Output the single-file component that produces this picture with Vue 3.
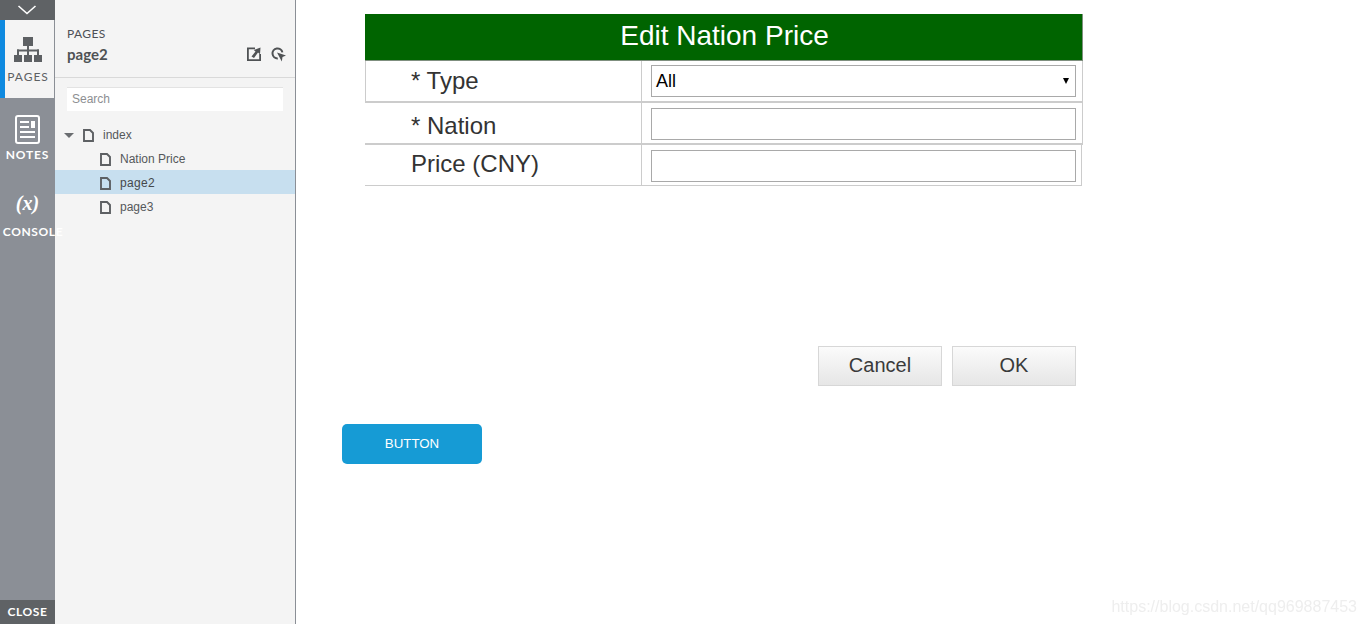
<script setup>
const tabs = [
  { id: 'pages', label: 'PAGES' },
  { id: 'notes', label: 'NOTES' },
  { id: 'console', label: 'CONSOLE' }
]
const children = [
  { name: 'Nation Price', selected: false },
  { name: 'page2', selected: true },
  { name: 'page3', selected: false }
]
</script>

<template>
  <div class="app">
    <nav class="rail">
      <div class="collapse">
        <svg width="20" height="10" viewBox="0 0 20 10"><path d="M1.5 1 L10 8.5 L18.5 1" fill="none" stroke="#fff" stroke-width="1.6" /></svg>
      </div>
      <div class="tab active">
        <svg width="28" height="25" viewBox="0 0 28 25" fill="#5d6063">
          <rect x="9" y="0" width="10" height="9" />
          <rect x="13" y="9" width="2" height="4" />
          <rect x="3" y="12.5" width="22" height="2" />
          <rect x="3" y="12.5" width="2" height="6" />
          <rect x="13" y="12.5" width="2" height="6" />
          <rect x="23" y="12.5" width="2" height="6" />
          <rect x="0" y="18" width="8" height="7" />
          <rect x="10" y="18" width="8" height="7" />
          <rect x="20" y="18" width="8" height="7" />
        </svg>
        <span class="tab-label">{{ tabs[0].label }}</span>
      </div>
      <div class="tab notes">
        <svg width="25" height="29" viewBox="0 0 25 29">
          <rect x="1" y="1" width="23" height="27" rx="2" fill="none" stroke="#fff" stroke-width="2" />
          <path d="M5 7h9M5 12h9M5 17h15M5 22h15" stroke="#fff" stroke-width="2" fill="none" />
          <rect x="16" y="6" width="4" height="7" fill="#fff" />
        </svg>
        <span class="tab-label">{{ tabs[1].label }}</span>
      </div>
      <div class="tab console">
        <span class="var">(x)</span>
        <span class="tab-label">{{ tabs[2].label }}</span>
      </div>
      <div class="close">CLOSE</div>
    </nav>

    <aside class="panel">
      <header class="panel-head">
        <div class="head-text">
          <div class="caption">PAGES</div>
          <div class="current">page2</div>
        </div>
        <div class="head-icons">
          <svg width="14" height="14" viewBox="0 0 14 14" fill="#4f5254">
            <path d="M0 0.5 H8 V2.2 H1.8 V12.2 H12.2 V7 H14 V14 H0 Z" />
            <path d="M4.5 9.5 L8.5 4.6 L6.8 3 L13.5 0.5 L13 7.2 L11 5.6 L7 11 Z" />
          </svg>
          <svg width="15" height="15" viewBox="0 0 15 15" fill="none">
            <path d="M6.8 11.4 A5 5 0 1 1 11.4 5.4" stroke="#4f5254" stroke-width="2" />
            <path d="M6 5.5 L15 8.4 L11.5 10 L10.8 14.5 Z" fill="#4f5254" />
          </svg>
        </div>
      </header>
      <div class="search">Search</div>
      <ul class="tree">
        <li class="node root">
          <span class="caret"></span>
          <svg class="file" width="11" height="13" viewBox="0 0 11 13"><path d="M1 1 H7 L10 4 V12 H1 Z" fill="none" stroke="#5d6063" stroke-width="1.9" /></svg>
          <span>index</span>
        </li>
        <li v-for="c in children" :key="c.name" class="node child" :class="{ selected: c.selected }">
          <svg class="file" width="11" height="13" viewBox="0 0 11 13"><path d="M1 1 H7 L10 4 V12 H1 Z" fill="none" stroke="#5d6063" stroke-width="1.9" /></svg>
          <span>{{ c.name }}</span>
        </li>
      </ul>
    </aside>

    <main class="canvas">
      <section class="form">
        <h1 class="title">Edit Nation Price</h1>
        <div class="row row-type">
          <div class="label">* Type</div>
          <div class="field">
            <div class="control select"><span>All</span><i class="arrow"></i></div>
          </div>
        </div>
        <div class="row row-nation">
          <div class="label">* Nation</div>
          <div class="field"><div class="control"></div></div>
        </div>
        <div class="row row-price">
          <div class="label">Price (CNY)</div>
          <div class="field"><div class="control"></div></div>
        </div>
        <div class="actions">
          <button class="btn">Cancel</button>
          <button class="btn">OK</button>
        </div>
      </section>
      <button class="primary">BUTTON</button>
    </main>

    <div class="watermark">https://blog.csdn.net/qq969887453</div>
  </div>
</template>

<style>
html, body { margin: 0; padding: 0; background: #fff; overflow: hidden; }
</style>

<style scoped>
.app {
  display: flex;
  width: 1366px;
  height: 624px;
  position: relative;
  overflow: hidden;
  font-family: "Liberation Sans", Arial, sans-serif;
}
.rail {
  width: 55px;
  flex: none;
  position: relative;
  z-index: 1;
  background: #8b8f96;
  display: flex;
  flex-direction: column;
  align-items: stretch;
  font-family: Lato, "Open Sans", sans-serif;
}
.collapse {
  height: 20px;
  background: #5f6265;
  display: flex;
  align-items: center;
  justify-content: center;
  padding-right: 1px;
  box-sizing: border-box;
}
.tab {
  height: 78px;
  display: flex;
  flex-direction: column;
  align-items: center;
  color: #fff;
  box-sizing: border-box;
  white-space: nowrap;
}
.tab.active {
  background: #f4f4f4;
  border-left: 5px solid #0f8ae0;
  margin-right: 1px;
  color: #5d6063;
  padding-top: 17px;
  padding-right: 3px;
}
.tab.notes { padding-top: 17px; }
.tab.console { padding-top: 15px; }
.tab-label {
  font-size: 12px;
  line-height: 14px;
  letter-spacing: 0.8px;
  margin-top: 7px;
}
.active .tab-label { font-weight: 400; letter-spacing: 1px; margin-top: 8px; }
.notes .tab-label { font-weight: 700; margin-top: 4px; }
.console .tab-label { font-weight: 700; margin-top: 10px; letter-spacing: 0.6px; margin-left: 11px; }
.var {
  font-family: "Liberation Serif", serif;
  font-style: italic;
  font-weight: 700;
  font-size: 20px;
  line-height: 24px;
  color: #fff;
}
.close {
  margin-top: auto;
  height: 24px;
  background: #5f6265;
  color: #fff;
  font-size: 12px;
  font-weight: 700;
  letter-spacing: 0.6px;
  line-height: 24px;
  text-align: center;
}
.panel {
  width: 241px;
  flex: none;
  box-sizing: border-box;
  background: #f4f4f4;
  border-right: 1px solid #8b8f96;
  font-size: 12px;
  color: #55585b;
}
.panel-head {
  height: 78px;
  box-sizing: border-box;
  border-bottom: 1px solid #d9d9d9;
  padding: 26px 9px 0 12px;
  display: flex;
  justify-content: space-between;
}
.caption {
  font-family: Lato, "Open Sans", sans-serif;
  font-size: 12px;
  line-height: 15px;
  letter-spacing: 0.4px;
  color: #4d5056;
}
.current {
  font-family: Lato, "Open Sans", sans-serif;
  font-weight: 700;
  font-size: 15px;
  line-height: 19px;
  margin-top: 4px;
  color: #4f5254;
}
.head-icons {
  display: flex;
  gap: 10px;
  padding-top: 21px;
  align-items: flex-start;
}
.search {
  margin: 9px 12px 0 12px;
  height: 24px;
  background: #fff;
  border-top: 1px solid #e3e3e3;
  box-sizing: border-box;
  padding-left: 5px;
  line-height: 23px;
  color: #8d8f92;
  font-size: 12px;
}
.tree {
  list-style: none;
  margin: 11px 0 0;
  padding: 0;
}
.node {
  height: 24px;
  box-sizing: border-box;
  padding-top: 2px;
  display: flex;
  align-items: center;
}
.root { padding-left: 9px; }
.child { padding-left: 45px; }
.child .file { margin-right: 9px; }
.root .file { margin-right: 9px; }
.child.selected { background: #c7dfef; color: #45484b; letter-spacing: 0.3px; }
.caret {
  width: 0;
  height: 0;
  border-left: 5px solid transparent;
  border-right: 5px solid transparent;
  border-top: 5px solid #6a6d70;
  margin-right: 9px;
}
.canvas {
  flex: 1;
  min-width: 0;
  padding: 14px 0 0 46px;
}
.form { margin-left: 23px; width: 718px; }
.title {
  margin: 0;
  height: 47px;
  box-sizing: border-box;
  background: #006400;
  border: 1px solid #7f8f7f;
  border-width: 0 1px 1px 0;
  padding-left: 2px;
  color: #fff;
  font-weight: 400;
  font-size: 28px;
  line-height: 43px;
  text-align: center;
}
.row {
  display: flex;
  color: #333;
  font-size: 24px;
  box-sizing: border-box;
  border-bottom: 2px solid #ccc;
  border-right: 1px solid #ccc;
}
.row-type { height: 42px; border-left: 1px solid #ccc; }
.row-nation { height: 42px; }
.row-price { height: 41px; border-bottom-width: 1px; width: 717px; }
.label {
  width: 276px;
  flex: none;
  box-sizing: border-box;
  padding-left: 46px;
  line-height: 41px;
}
.row-type .label { width: 275px; padding-left: 45px; line-height: 40px; }
.row-nation .label { line-height: 46px; }
.row-price .label { line-height: 38px; }
.field {
  flex: 1;
  border-left: 1px solid #ccc;
  padding-left: 9px;
  min-width: 0;
}
.control {
  width: 425px;
  height: 32px;
  box-sizing: border-box;
  border: 1px solid #a9a9a9;
  background: #fff;
}
.row-type .control { margin-top: 4px; }
.row-nation .control { margin-top: 5px; }
.row-price .control { margin-top: 5px; }
.select {
  display: flex;
  align-items: center;
  justify-content: space-between;
  padding: 0 6px 0 4px;
  font-size: 18px;
  color: #000;
}
.arrow {
  width: 0;
  height: 0;
  border-left: 3px solid transparent;
  border-right: 3px solid transparent;
  border-top: 6px solid #000;
}
.actions {
  display: flex;
  justify-content: flex-end;
  gap: 10px;
  margin-top: 160px;
  padding-right: 7px;
}
.btn {
  width: 124px;
  height: 40px;
  box-sizing: border-box;
  border: 1px solid #d7d7d7;
  background: linear-gradient(#fbfbfb, #e6e6e6);
  color: #3a3a3a;
  font-family: inherit;
  font-size: 20px;
  padding: 0 0 2px;
}
.primary {
  display: block;
  margin-top: 38px;
  width: 140px;
  height: 40px;
  border: 0;
  border-radius: 5px;
  background: #169bd5;
  color: #fff;
  font-family: inherit;
  font-size: 13.3px;
  padding: 0 0 2px;
}
.watermark {
  position: absolute;
  right: 9px;
  bottom: 8px;
  font-size: 16px;
  line-height: 18px;
  color: #eeeeee;
  filter: blur(0.5px);
}
</style>
